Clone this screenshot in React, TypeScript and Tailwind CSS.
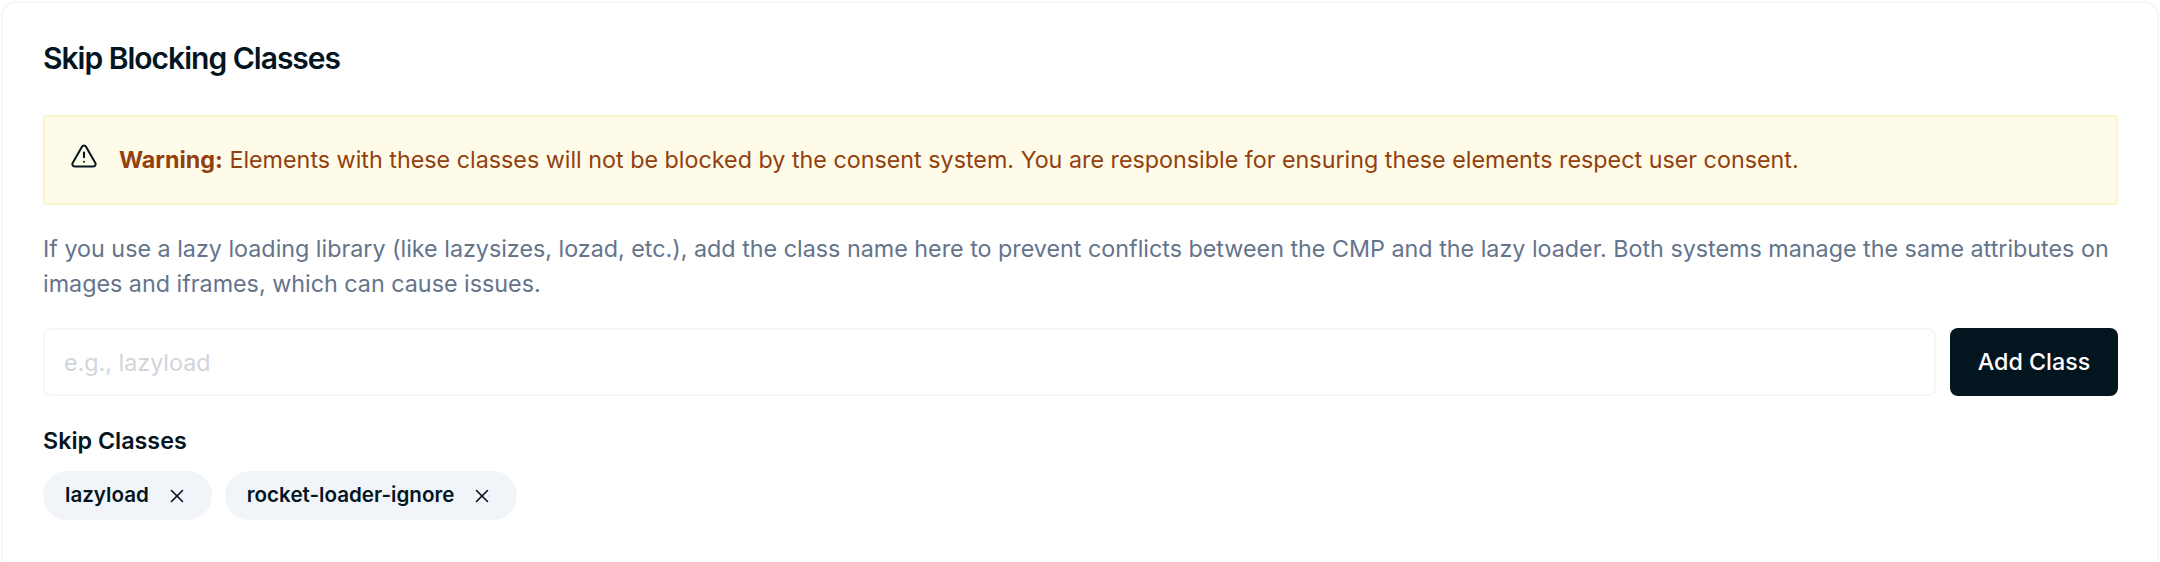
import { TriangleAlert, X } from 'lucide-react'

const classes = ['lazyload', 'rocket-loader-ignore']

const App = () => {
  return (
    <div className="w-[2160px] h-[562px] overflow-hidden bg-white font-['Inter',sans-serif] p-px">
      <div className="h-[570px] rounded-[16px] border-2 border-[#f4f6fa] bg-white pl-[40px] pr-[39px]">
        <h2 className="pt-[36px] text-[30px] leading-[38px] font-semibold tracking-[-1px] text-[#03151f]">
          Skip Blocking Classes
        </h2>

        <div className="mt-[38px] flex h-[90px] items-center rounded-[3px] border-2 border-[#fbf5cf] bg-[#fefce9] pl-[25px]">
          <TriangleAlert className="w-[28px] h-[28px] shrink-0 text-[#03151f] mb-[8px]" strokeWidth={1.75} />
          <p className="ml-[21px] mb-[1px] text-[23.3px] leading-[34px] text-[#92400e]">
            <span className="font-bold">Warning:</span> Elements with these classes will not be blocked by the consent system. You are responsible for ensuring these elements respect user consent.
          </p>
        </div>

        <p className="mt-[26px] text-[23.3px] leading-[35px] text-[#64748b]">
          If you use a lazy loading library (like lazysizes, lozad, etc.), add the class name here to prevent conflicts between the CMP and the lazy loader. Both systems manage the same attributes on images and iframes, which can cause issues.
        </p>

        <div className="mt-[27px] flex gap-[14px]">
          <input
            placeholder="e.g., lazyload"
            className="h-[68px] flex-1 rounded-[8px] border-2 border-[#f4f6fa] bg-white px-[19px] text-[23.3px] outline-none placeholder:text-[#d1d5db]"
          />
          <button className="h-[68px] w-[168px] rounded-[8px] bg-[#03151f] text-[23.3px] font-medium text-white">
            Add Class
          </button>
        </div>

        <div className="mt-[28px] text-[23.3px] leading-[34px] font-semibold text-[#03151f]">Skip Classes</div>

        <div className="mt-[13px] flex gap-[13px]">
          {classes.map((name) => (
            <span key={name} className="flex h-[49px] items-center rounded-full bg-[#f1f5f9] pl-[22px] pr-[24px] text-[20.6px] font-semibold text-[#03151f]">
              {name}
              <X className="ml-[17px] w-[22px] h-[22px]" strokeWidth={1.75} />
            </span>
          ))}
        </div>
      </div>
    </div>
  )
}

export default App
